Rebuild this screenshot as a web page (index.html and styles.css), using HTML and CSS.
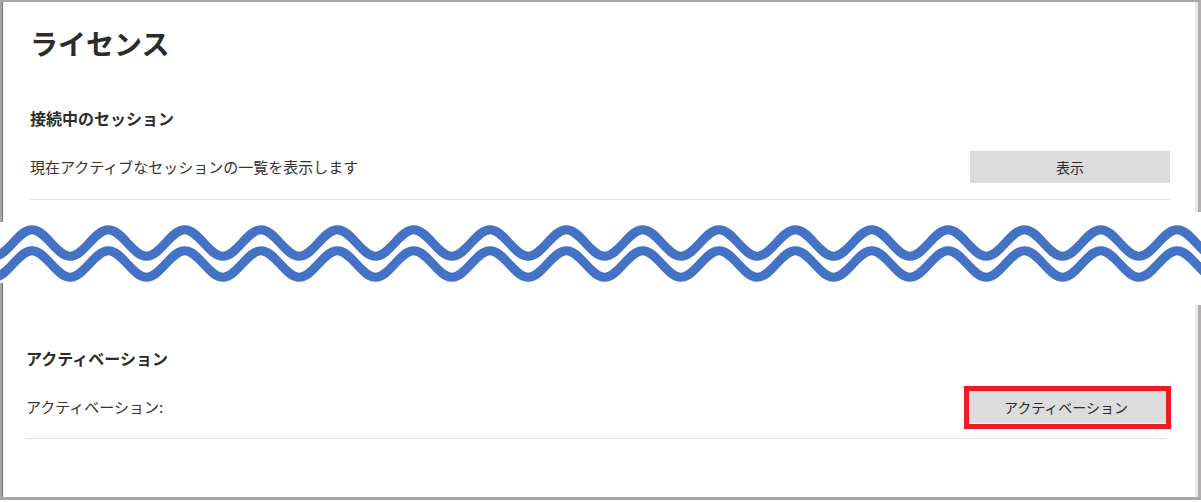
FILE: index.html
```html
<!DOCTYPE html>
<html lang="ja">
<head>
<meta charset="utf-8">
<title>ライセンス</title>
<link rel="stylesheet" href="styles.css">
</head>
<body>
<div class="frame">
  <section class="panel panel-top">
    <h1 class="title">ライセンス</h1>
    <h2 class="section-title">接続中のセッション</h2>
    <div class="row">
      <span class="label">現在アクティブなセッションの一覧を表示します</span>
      <button class="btn" type="button">表示</button>
    </div>
    <hr class="divider">
  </section>

  <div class="break">
    <svg class="wave" width="1201" height="93" viewBox="0 0 1201 93" xmlns="http://www.w3.org/2000/svg">
      <rect x="0" y="0" width="2" height="10" fill="#a9a6a6"/>
      <rect x="2" y="0" width="1" height="10" fill="#6e6e6e"/>
      <rect x="0" y="71" width="2" height="22" fill="#a9a6a6"/>
      <rect x="2" y="71" width="1" height="22" fill="#6e6e6e"/>
      <path id="w" fill="none" stroke="#4472c4" stroke-width="9" d="M-44.33 17.75 c13.87 0 24.3 26.5 38.17 26.5 s24.3 -26.5 38.17 -26.5 s24.3 26.5 38.17 26.5 s24.3 -26.5 38.17 -26.5 s24.3 26.5 38.17 26.5 s24.3 -26.5 38.17 -26.5 s24.3 26.5 38.17 26.5 s24.3 -26.5 38.17 -26.5 s24.3 26.5 38.17 26.5 s24.3 -26.5 38.17 -26.5 s24.3 26.5 38.17 26.5 s24.3 -26.5 38.17 -26.5 s24.3 26.5 38.17 26.5 s24.3 -26.5 38.17 -26.5 s24.3 26.5 38.17 26.5 s24.3 -26.5 38.17 -26.5 s24.3 26.5 38.17 26.5 s24.3 -26.5 38.17 -26.5 s24.3 26.5 38.17 26.5 s24.3 -26.5 38.17 -26.5 s24.3 26.5 38.17 26.5 s24.3 -26.5 38.17 -26.5 s24.3 26.5 38.17 26.5 s24.3 -26.5 38.17 -26.5 s24.3 26.5 38.17 26.5 s24.3 -26.5 38.17 -26.5 s24.3 26.5 38.17 26.5 s24.3 -26.5 38.17 -26.5 s24.3 26.5 38.17 26.5 s24.3 -26.5 38.17 -26.5 s24.3 26.5 38.17 26.5 s24.3 -26.5 38.17 -26.5 s24.3 26.5 38.17 26.5 s24.3 -26.5 38.17 -26.5"/>
      <use href="#w" y="21"/>
    </svg>
  </div>

  <section class="panel panel-bottom">
    <h2 class="section-title">アクティベーション</h2>
    <div class="row">
      <span class="label">アクティベーション:</span>
      <span class="btn-wrap">
        <button class="btn" type="button">アクティベーション</button>
        <span class="highlight"></span>
      </span>
    </div>
    <hr class="divider">
  </section>
</div>
</body>
</html>
```

FILE: styles.css
```css
html, body {
  margin: 0;
  padding: 0;
  background: #ffffff;
}

body {
  font-family: "Noto Sans CJK JP", "Noto Sans", sans-serif;
  color: #333333;
}

.frame {
  width: 1201px;
}

.panel {
  box-sizing: border-box;
  width: 1201px;
  border-left: 2px solid #a9a6a6;
  border-right: 3px solid #b1aeae;
  box-shadow: inset 1px 0 0 #6e6e6e, inset -3px 0 0 #e9e9e9;
  background: #ffffff;
}

.panel-top {
  height: 212px;
  border-top: 2px solid #a9a6a6;
  padding: 23px 28px 0 28px;
}

.panel-bottom {
  height: 195px;
  border-bottom: 3px solid #a9a6a6;
  padding: 41px 32px 0 24px;
}

.title {
  margin: 0;
  font-size: 28px;
  line-height: 36px;
  font-weight: 700;
  color: #2b2b2b;
}

.section-title {
  margin: 0;
  font-size: 16px;
  line-height: 24px;
  font-weight: 700;
  color: #2b2b2b;
}

.panel-top .section-title {
  margin-top: 45px;
}

.row {
  display: flex;
  align-items: center;
  justify-content: space-between;
  margin-top: 21px;
}

.label {
  font-size: 15px;
  line-height: 22px;
  color: #333333;
}

.btn {
  display: block;
  width: 200px;
  height: 32px;
  padding: 0;
  border: 0;
  background: #dcdcdc;
  font-family: inherit;
  font-size: 14px;
  color: #2b2b2b;
}

.btn-wrap {
  position: relative;
  display: flex;
}

.highlight {
  position: absolute;
  left: -2px;
  top: -5px;
  width: 207px;
  height: 43px;
  box-sizing: border-box;
  border: 5px solid #ed1c24;
}

.divider {
  height: 0;
  margin: 16px 0 0 0;
  border: 0;
  border-top: 1px solid #e1e1e1;
}

.panel-bottom .divider {
  margin-top: 15px;
}

.break {
  height: 93px;
  background: #ffffff;
}

.wave {
  display: block;
}
```
